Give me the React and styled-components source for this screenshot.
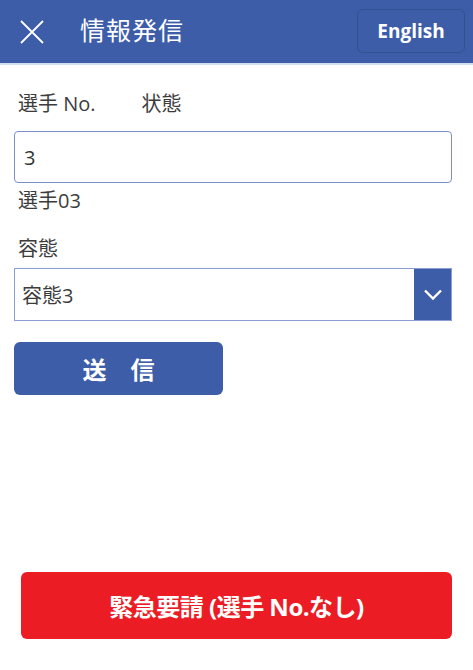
import styled, { createGlobalStyle } from "styled-components";

const Global = createGlobalStyle`
  html, body {
    margin: 0;
    padding: 0;
    background: #ffffff;
    font-family: "Open Sans", "Noto Sans CJK JP", sans-serif;
  }
`;

const BLUE = "#3d5da9";

export default function App() {
  return (
    <>
      <Global />
      <Page>
        <Header>
          <CloseButton aria-label="close">
            <svg width="24" height="24" viewBox="0 0 24 24">
              <path d="M1 1 L23 23 M23 1 L1 23" stroke="#fff" strokeWidth="1.8" fill="none" />
            </svg>
          </CloseButton>
          <Title>情報発信</Title>
          <LangButton>English</LangButton>
        </Header>

        <Form>
          <LabelRow>
            <Label>選手 No.</Label>
            <Label>状態</Label>
          </LabelRow>
          <Input defaultValue="3" />
          <Hint>選手03</Hint>

          <Label $top={20}>容態</Label>
          <Select>
            <SelectValue>容態3</SelectValue>
            <Chevron>
              <svg width="20" height="13" viewBox="0 0 20 13">
                <path d="M2 2.5 L10 10.5 L18 2.5" stroke="#fff" strokeWidth="2.4" fill="none" />
              </svg>
            </Chevron>
          </Select>

          <SendButton>送　信</SendButton>
        </Form>

        <Footer>
          <EmergencyButton>緊急要請 (選手 No.なし)</EmergencyButton>
        </Footer>
      </Page>
    </>
  );
}

const Page = styled.div`
  min-height: 670px;
  display: flex;
  flex-direction: column;
`;

const Header = styled.header`
  height: 63px;
  background: ${BLUE};
  border-bottom: 2px solid #d3ddf2;
  display: flex;
  align-items: center;
  padding: 0 8px 0 20px;
`;

const CloseButton = styled.button`
  background: none;
  border: none;
  padding: 0;
  width: 24px;
  height: 24px;
  display: flex;
  margin-top: 1px;
`;

const Title = styled.h1`
  margin: 0 0 0 36px;
  font-family: "Noto Sans CJK JP", sans-serif;
  font-size: 25px;
  font-weight: 400;
  color: #ffffff;
  letter-spacing: 1px;
  flex: 1;
  line-height: 1;
  margin-top: -4px;
`;

const LangButton = styled.button`
  width: 108px;
  height: 44px;
  margin-top: -1px;
  border: 1px solid #34518f;
  border-radius: 6px;
  background: ${BLUE};
  color: #ffffff;
  font-family: "Open Sans", sans-serif;
  font-weight: 700;
  font-size: 19px;
`;

const Form = styled.div`
  padding: 25px 21px 0 14px;
  display: flex;
  flex-direction: column;
  align-items: flex-start;
`;

const LabelRow = styled.div`
  display: flex;
  gap: 46px;
  padding-left: 4px;
`;

const Label = styled.div`
  font-size: 20px;
  color: #3c3c3c;
  line-height: 28px;
  padding-left: 4px;
  margin-top: ${(p) => p.$top || 0}px;
  ${LabelRow} & {
    padding-left: 0;
  }
`;

const Input = styled.input`
  box-sizing: border-box;
  width: 100%;
  height: 52px;
  margin-top: 13px;
  border: 1.5px solid #7c8fcc;
  border-radius: 4px;
  padding: 0 9px;
  font-family: "Open Sans", sans-serif;
  font-size: 20px;
  color: #333333;
  outline: none;
`;

const Hint = styled.div`
  font-size: 20px;
  color: #3c3c3c;
  line-height: 28px;
  padding-left: 4px;
  margin-top: 4px;
`;

const Select = styled.div`
  box-sizing: border-box;
  width: 100%;
  height: 53px;
  margin-top: 5px;
  border: 1.5px solid #8a9dd4;
  display: flex;
  align-items: stretch;
`;

const SelectValue = styled.div`
  flex: 1;
  display: flex;
  align-items: center;
  padding-left: 7px;
  font-size: 20px;
  color: #3c3c3c;
`;

const Chevron = styled.div`
  width: 37px;
  background: ${BLUE};
  display: flex;
  align-items: center;
  justify-content: center;
`;

const SendButton = styled.button`
  margin-top: 21px;
  width: 209px;
  height: 53px;
  border: none;
  border-radius: 6px;
  background: ${BLUE};
  color: #ffffff;
  font-family: "Noto Sans CJK JP", sans-serif;
  font-weight: 700;
  font-size: 24px;
`;

const Footer = styled.div`
  margin-top: auto;
  padding: 0 21px 31px 21px;
`;

const EmergencyButton = styled.button`
  width: 100%;
  height: 67px;
  border: none;
  border-radius: 6px;
  background: #ec1c24;
  color: #ffffff;
  font-family: "Open Sans", "Noto Sans CJK JP", sans-serif;
  font-weight: 700;
  font-size: 24px;
  letter-spacing: -0.5px;
`;
